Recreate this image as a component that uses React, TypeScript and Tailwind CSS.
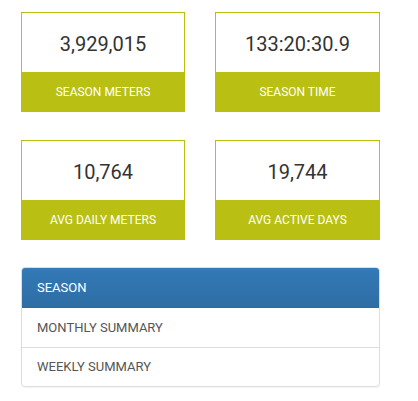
import React from "react";

const stats = [
  { value: "3,929,015", label: "SEASON METERS" },
  { value: "133:20:30.9", label: "SEASON TIME" },
  { value: "10,764", label: "AVG DAILY METERS" },
  { value: "19,744", label: "AVG ACTIVE DAYS" },
];

function StatCard({ value, label }: { value: string; label: string }) {
  return (
    <div className="flex flex-col h-[100px] border border-[#b9c013]">
      <div className="h-[59px] flex items-center justify-center bg-white text-[20px] text-[#333] pt-[2px]">
        {value}
      </div>
      <div className="flex-1 flex items-center justify-center bg-[#b9c013] text-white text-[12px]">
        {label}
      </div>
    </div>
  );
}

export default function App() {
  return (
    <div
      className="w-[418px] h-[401px] bg-white pl-[21px] pr-[38px] pt-[12px]"
      style={{ fontFamily: "Roboto, 'Open Sans', sans-serif" }}
    >
      <div className="grid grid-cols-[164px_165px] gap-x-[30px] gap-y-[28px]">
        {stats.map((s) => (
          <StatCard key={s.label} value={s.value} label={s.label} />
        ))}
      </div>
      <div className="mt-[27px] rounded-[4px] border border-[#ddd] shadow-[0_1px_1px_rgba(0,0,0,0.05)] overflow-hidden">
        <div className="h-[40px] flex items-center px-[15px] text-white text-[13px] bg-gradient-to-b from-[#337ab7] to-[#2e6da4] border-b border-[#2e6da4]">
          SEASON
        </div>
        <div className="h-[40px] flex items-center px-[15px] text-[13px] text-[#555] border-b border-[#ddd]">
          MONTHLY SUMMARY
        </div>
        <div className="h-[38px] flex items-center px-[15px] text-[13px] text-[#555]">
          WEEKLY SUMMARY
        </div>
      </div>
    </div>
  );
}
